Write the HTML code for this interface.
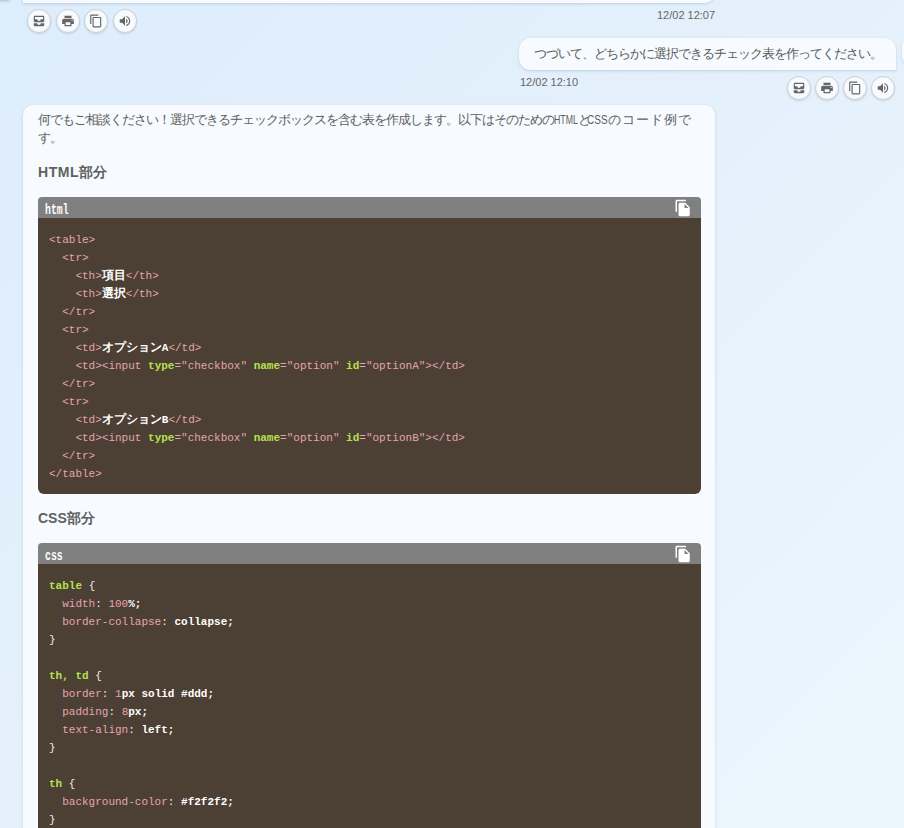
<!DOCTYPE html>
<html><head><meta charset="utf-8">
<style>
html,body{margin:0;padding:0;}
body{width:904px;height:828px;overflow:hidden;position:relative;
  background:linear-gradient(135deg,#deedfc 0%,#e4f1fc 50%,#ecf7fd 100%);
  font-family:"Liberation Sans",sans-serif;color:#444;}
.abs{position:absolute;}
.bubble{position:absolute;background:#f7fbff;box-shadow:0 1px 3px rgba(60,90,120,0.22);}
.ib{position:absolute;width:22px;height:22px;border-radius:50%;background:#f7fbff;border:1px solid #cfcfcf;box-shadow:0 1px 2px rgba(0,0,0,0.12);}
.ib svg{position:absolute;left:4px;top:4px;width:14px;height:14px;fill:#666;}
.ts{position:absolute;font-size:11px;color:#666;white-space:nowrap;}
.code{position:absolute;left:38px;width:663px;border-radius:4px 4px 6px 6px;overflow:hidden;}
.code .hd{height:21px;background:#808080;position:relative;}
.code .hd span{position:absolute;left:7px;top:5px;font-family:"Liberation Mono",monospace;font-size:14px;color:#fff;font-weight:bold;transform:scaleX(0.7);transform-origin:0 0;}
.code .hd svg{position:absolute;left:636px;top:2px;width:18px;height:18px;fill:#fff;}
.code .bd{background:#4c3f33;padding:13px 0 0 11px;font-family:"Liberation Mono",monospace;font-size:11px;line-height:18px;color:#fff;white-space:pre;}
.t{color:#e4a5b4;}
.p{color:#eee;}
.k{color:#b8e04e;font-weight:bold;}
.s{color:#e4a5b4;}
.w{color:#fff;font-weight:bold;}
.j{font-size:12px;}
h3{position:absolute;margin:0;font-size:14px;font-weight:bold;color:#606060;}
.lat{font-size:11px;letter-spacing:-1.1px;}
</style></head><body>

<!-- previous bubble bottom -->
<div class="bubble" style="left:23px;top:-40px;width:692px;height:43px;border-radius:0 0 10px 0;"></div>
<div class="abs" style="left:-20px;top:-40px;width:32px;height:40px;border-radius:0 0 6px 6px;background:#f7fbff;box-shadow:0 1px 3px rgba(60,90,120,0.35);"></div>

<div class="ib" style="left:27px;top:9px;"><svg viewBox="0 0 24 24"><path d="M19 3H5c-1.1 0-2 .9-2 2v7c0 1.1.9 2 2 2h14c1.1 0 2-.9 2-2V5c0-1.1-.9-2-2-2zm0 6h-4c0 1.62-1.38 3-3 3s-3-1.38-3-3H5V5h14v4zm-4 7h6v3c0 1.1-.9 2-2 2H5c-1.1 0-2-.9-2-2v-3h6c0 1.66 1.34 3 3 3s3-1.34 3-3z"/></svg></div>
<div class="ib" style="left:55.5px;top:9px;"><svg viewBox="0 0 24 24"><path d="M19 8H5c-1.66 0-3 1.34-3 3v6h4v4h12v-4h4v-6c0-1.66-1.34-3-3-3zm-3 11H8v-5h8v5zm3-7c-.55 0-1-.45-1-1s.45-1 1-1 1 .45 1 1-.45 1-1 1zm-1-9H6v4h12V3z"/></svg></div>
<div class="ib" style="left:84px;top:9px;"><svg viewBox="0 0 24 24"><path d="M16 1H4c-1.1 0-2 .9-2 2v14h2V3h12V1zm3 4H8c-1.1 0-2 .9-2 2v14c0 1.1.9 2 2 2h11c1.1 0 2-.9 2-2V7c0-1.1-.9-2-2-2zm0 16H8V7h11v14z"/></svg></div>
<div class="ib" style="left:112.5px;top:9px;"><svg viewBox="0 0 24 24"><path d="M3 9v6h4l5 5V4L7 9H3zm13.5 3c0-1.77-1.02-3.29-2.5-4.03v8.05c1.48-.73 2.5-2.25 2.5-4.02zM14 3.230v2.06c2.89.86 5 3.54 5 6.71s-2.11 5.85-5 6.71v2.06c4.01-.91 7-4.490 7-8.77s-2.99-7.86-7-8.77z"/></svg></div>
<div class="ts" style="left:657px;top:9px;">12/02 12:07</div>

<!-- user bubble -->
<div class="bubble" style="left:519px;top:38px;width:377px;height:32px;border-radius:12px 12px 0 12px;">
  <div class="abs" id="utext" style="left:15px;top:7px;font-size:13px;letter-spacing:-1px;color:#5a5a5a;white-space:nowrap;">つづいて、どちらかに選択できるチェック表を作ってください。</div>
</div>
<div class="abs" style="left:902px;top:40px;width:30px;height:23px;border-radius:6px;background:#f7fbff;box-shadow:0 1px 3px rgba(60,90,120,0.22);"></div>
<div class="ts" style="left:520px;top:76px;">12/02 12:10</div>
<div class="ib" style="left:787px;top:76px;"><svg viewBox="0 0 24 24"><path d="M19 3H5c-1.1 0-2 .9-2 2v7c0 1.1.9 2 2 2h14c1.1 0 2-.9 2-2V5c0-1.1-.9-2-2-2zm0 6h-4c0 1.62-1.38 3-3 3s-3-1.38-3-3H5V5h14v4zm-4 7h6v3c0 1.1-.9 2-2 2H5c-1.1 0-2-.9-2-2v-3h6c0 1.66 1.34 3 3 3s3-1.34 3-3z"/></svg></div>
<div class="ib" style="left:815px;top:76px;"><svg viewBox="0 0 24 24"><path d="M19 8H5c-1.66 0-3 1.34-3 3v6h4v4h12v-4h4v-6c0-1.66-1.34-3-3-3zm-3 11H8v-5h8v5zm3-7c-.55 0-1-.45-1-1s.45-1 1-1 1 .45 1 1-.45 1-1 1zm-1-9H6v4h12V3z"/></svg></div>
<div class="ib" style="left:843px;top:76px;"><svg viewBox="0 0 24 24"><path d="M16 1H4c-1.1 0-2 .9-2 2v14h2V3h12V1zm3 4H8c-1.1 0-2 .9-2 2v14c0 1.1.9 2 2 2h11c1.1 0 2-.9 2-2V7c0-1.1-.9-2-2-2zm0 16H8V7h11v14z"/></svg></div>
<div class="ib" style="left:871px;top:76px;"><svg viewBox="0 0 24 24"><path d="M3 9v6h4l5 5V4L7 9H3zm13.5 3c0-1.77-1.02-3.290-2.5-4.03v8.05c1.48-.73 2.5-2.25 2.5-4.02zM14 3.23v2.06c2.89.86 5 3.54 5 6.71s-2.11 5.85-5 6.71v2.06c4.01-.91 7-4.49 7-8.77s-2.99-7.86-7-8.77z"/></svg></div>

<!-- assistant bubble -->
<div class="bubble" style="left:23px;top:105px;width:692px;height:800px;border-radius:10px;">
</div>
<div class="abs" id="btext" style="left:38px;top:111px;width:670px;font-size:13px;line-height:18px;letter-spacing:-1px;color:#5e5e5e;white-space:nowrap;"><span id="l1">何でもご相談ください！選択できるチェックボックスを含む表を作成します。以下はそのための<span class="lat" id="lh" style="display:inline-block;font-size:12.5px;letter-spacing:0;transform:scaleX(0.7);transform-origin:0 0;margin-right:-10.3px">HTML</span><span style="letter-spacing:-3.4px">と</span><span class="lat" id="lc" style="display:inline-block;font-size:12.5px;letter-spacing:0;transform:scaleX(0.8);transform-origin:0 0;margin-right:-5.1px">CSS</span><span style="letter-spacing:1px">のコード例で</span></span><br>す。</div>
<h3 style="left:38px;top:164px;"><span style="letter-spacing:0.6px">HTML</span>部分</h3>

<div class="code" style="top:197px;">
<div class="hd"><span>html</span><svg viewBox="0 0 24 24"><path d="M16 1H4c-1.1 0-2 .9-2 2v14h2V3h12V1zm-1 4l6 6v10c0 1.1-.9 2-2 2H7.99C6.890 23 6 22.1 6 21l.01-14c0-1.1.89-2 1.99-2h7zm-1 7h5.5L14 6.5V12z"/></svg></div>
<div class="bd" style="height:263px;"><span class="t">&lt;table&gt;</span>
  <span class="t">&lt;tr&gt;</span>
    <span class="t">&lt;th&gt;</span><span class="w j">項目</span><span class="t">&lt;/th&gt;</span>
    <span class="t">&lt;th&gt;</span><span class="w j">選択</span><span class="t">&lt;/th&gt;</span>
  <span class="t">&lt;/tr&gt;</span>
  <span class="t">&lt;tr&gt;</span>
    <span class="t">&lt;td&gt;</span><span class="w"><span class="j">オプション</span>A</span><span class="t">&lt;/td&gt;</span>
    <span class="t">&lt;td&gt;&lt;input </span><span class="k">type</span><span class="t">=</span><span class="s">"checkbox"</span> <span class="k">name</span><span class="t">=</span><span class="s">"option"</span> <span class="k">id</span><span class="t">=</span><span class="s">"optionA"</span><span class="t">&gt;&lt;/td&gt;</span>
  <span class="t">&lt;/tr&gt;</span>
  <span class="t">&lt;tr&gt;</span>
    <span class="t">&lt;td&gt;</span><span class="w"><span class="j">オプション</span>B</span><span class="t">&lt;/td&gt;</span>
    <span class="t">&lt;td&gt;&lt;input </span><span class="k">type</span><span class="t">=</span><span class="s">"checkbox"</span> <span class="k">name</span><span class="t">=</span><span class="s">"option"</span> <span class="k">id</span><span class="t">=</span><span class="s">"optionB"</span><span class="t">&gt;&lt;/td&gt;</span>
  <span class="t">&lt;/tr&gt;</span>
<span class="t">&lt;/table&gt;</span></div>
</div>

<h3 style="left:38px;top:510px;">CSS部分</h3>
<div class="code" style="top:543px;">
<div class="hd"><span>css</span><svg viewBox="0 0 24 24"><path d="M16 1H4c-1.1 0-2 .9-2 2v14h2V3h12V1zm-1 4l6 6v10c0 1.1-.9 2-2 2H7.99C6.89 23 6 22.1 6 21l.01-14c0-1.1.89-2 1.99-2h7zm-1 7h5.5L14 6.5V12z"/></svg></div>
<div class="bd" style="height:400px;"><span class="k">table</span> <span class="p">{</span>
  <span class="t">width</span><span class="p">: </span><span class="t">100</span><span class="w">%;</span>
  <span class="t">border-collapse</span><span class="p">: </span><span class="w">collapse;</span>
<span class="p">}</span>

<span class="k">th, td</span> <span class="p">{</span>
  <span class="t">border</span><span class="p">: </span><span class="t">1</span><span class="w">px solid #ddd;</span>
  <span class="t">padding</span><span class="p">: </span><span class="t">8</span><span class="w">px;</span>
  <span class="t">text-align</span><span class="p">: </span><span class="w">left;</span>
<span class="p">}</span>

<span class="k">th</span> <span class="p">{</span>
  <span class="t">background-color</span><span class="p">: </span><span class="w">#f2f2f2;</span>
<span class="p">}</span></div>
</div>

</body></html>
